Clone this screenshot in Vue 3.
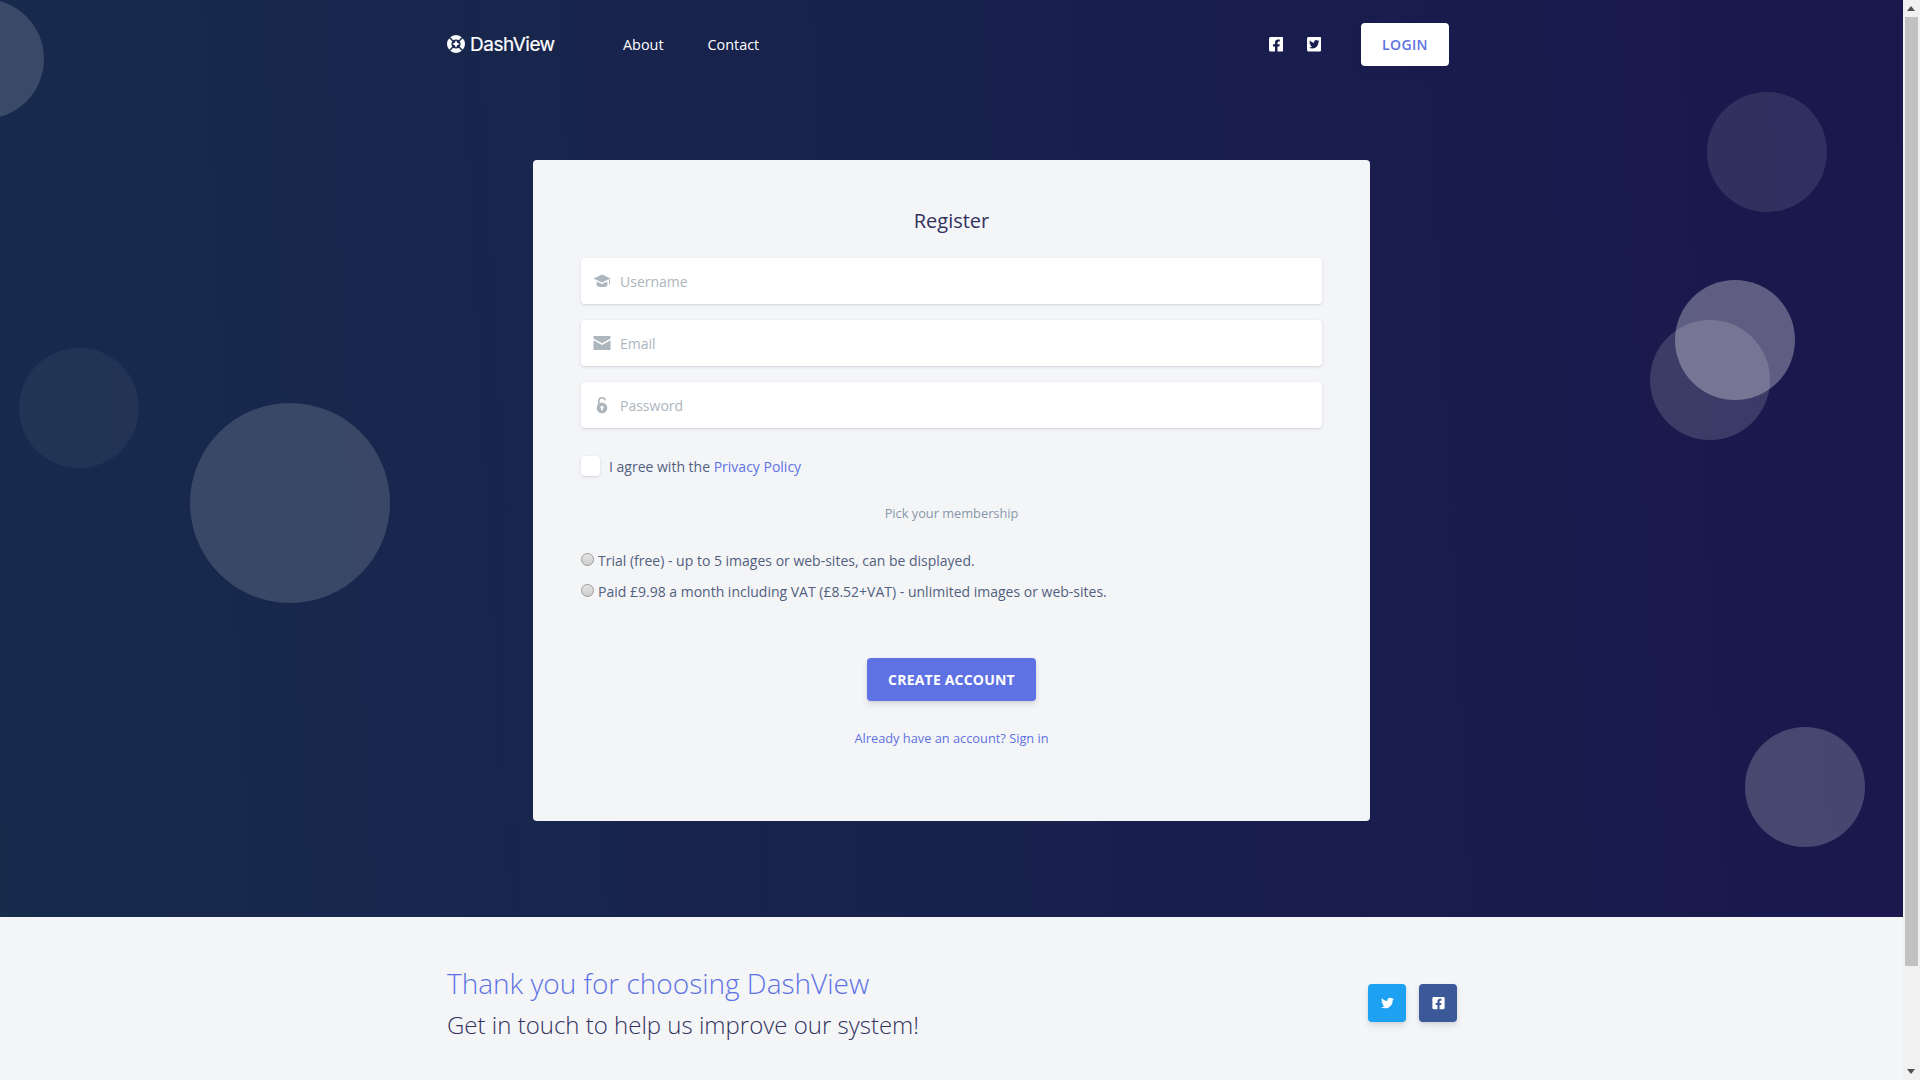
<script setup>
const circles = [
  { s: 120, x: -76, y: -1, a: 0.15 },
  { s: 120, x: 19, y: 348, a: 0.05 },
  { s: 200, x: 190, y: 403, a: 0.15 },
  { s: 120, x: 1707, y: 92, a: 0.1 },
  { s: 120, x: 1675, y: 280, a: 0.3 },
  { s: 120, x: 1650, y: 320, a: 0.15 },
  { s: 120, x: 1745, y: 727, a: 0.2 },
]
const circleStyle = (c) => ({ width: c.s + 'px', height: c.s + 'px', left: c.x + 'px', top: c.y + 'px', background: `rgba(255,255,255,${c.a})` })
const fbSquare = 'M400 32H48A48 48 0 0 0 0 80v352a48 48 0 0 0 48 48h137.25V327.69h-63V256h63v-54.64c0-62.15 37-96.48 93.67-96.48 27.14 0 55.52 4.84 55.52 4.84v61h-31.27c-30.81 0-40.42 19.12-40.42 38.73V256h68.78l-11 71.69h-57.78V480H400a48 48 0 0 0 48-48V80a48 48 0 0 0-48-48z'
const twSquare = 'M400 32H48C21.5 32 0 53.5 0 80v352c0 26.5 21.5 48 48 48h352c26.5 0 48-21.5 48-48V80c0-26.5-21.5-48-48-48zm-48.9 158.8c.2 2.8.2 5.7.2 8.5 0 86.7-66 186.6-186.6 186.6-37.2 0-71.7-10.8-100.7-29.4 5.3.6 10.4.8 15.8.8 30.7 0 58.9-10.4 81.4-28-28.8-.6-53-19.5-61.3-45.5 10.1 1.5 19.2 1.5 29.6-1.2-30-6.1-52.5-32.5-52.5-64.4v-.8c8.7 4.9 18.9 7.9 29.6 8.3a65.447 65.447 0 0 1-29.2-54.6c0-12.2 3.2-23.4 8.9-33.1 32.3 39.8 80.8 65.8 135.2 68.6-9.3-44.5 24-80.6 64-80.6 18.9 0 35.9 7.9 47.9 20.7 14.8-2.8 29-7.2 41.6-14.8-4.9 15.2-15.2 28-28.8 36 13.2-1.4 26-5.1 37.8-10.2-8.9 13.1-20.1 24.7-32.9 34z'
const bird = 'M459.37 151.716c.325 4.548.325 9.097.325 13.645 0 138.72-105.583 298.558-298.558 298.558-59.452 0-114.68-17.219-161.137-47.106 8.447.974 16.568 1.299 25.34 1.299 49.055 0 94.213-16.568 130.274-44.832-46.132-.975-84.792-31.188-98.112-72.772 6.498.974 12.995 1.624 19.818 1.624 9.421 0 18.843-1.3 27.614-3.573-48.081-9.747-84.143-51.98-84.143-102.985v-1.299c13.969 7.797 30.214 12.67 47.431 13.319-28.264-18.843-46.781-51.005-46.781-87.391 0-19.492 5.197-37.36 14.294-52.954 51.655 63.675 129.3 105.258 216.365 109.807-1.624-7.797-2.599-15.918-2.599-24.04 0-57.828 46.782-104.934 104.934-104.934 30.213 0 57.502 12.67 76.67 33.137 23.715-4.548 46.456-13.32 66.599-25.34-7.798 24.366-24.366 44.833-46.132 57.827 21.117-2.273 41.584-8.122 60.426-16.243-14.292 20.791-32.161 39.308-52.628 54.253z'
</script>

<template>
  <div class="page">
    <div class="main">
      <section class="hero">
        <span v-for="(c, i) in circles" :key="i" class="circle" :style="circleStyle(c)"></span>
        <nav class="nav">
          <a class="brand">
            <svg class="brand-mark" viewBox="0 0 18 18" aria-hidden="true">
              <circle cx="9" cy="9" r="9" fill="#fff"/>
              <path stroke="#182750" stroke-width="1.5" d="M2 2 6 6M16 2 12 6M2 16 6 12M16 16 12 12"/>
              <circle cx="9" cy="9" r="4.6" fill="#182750"/>
              <path fill="#fff" d="M9 5.2 10.3 7.7 12.8 9 10.3 10.3 9 12.8 7.7 10.3 5.2 9 7.7 7.7z"/>
            </svg>
            <span class="brand-text">DashView</span>
          </a>
          <div class="links">
            <a>About</a>
            <a>Contact</a>
          </div>
          <div class="nav-right">
            <svg class="top-icon" viewBox="0 0 448 512"><path fill="#fff" :d="fbSquare"/></svg>
            <svg class="top-icon" viewBox="0 0 448 512"><path fill="#fff" :d="twSquare"/></svg>
            <button class="login">Login</button>
          </div>
        </nav>

        <div class="card">
          <h2 class="title">Register</h2>
          <div class="field">
            <svg class="ficon" viewBox="0 0 18 18"><path fill="#adb5bd" d="M9 2.4 .5 6.4 9 10.4l8.5-4z"/><path fill="#adb5bd" d="M3.6 9.4 9 12l5.4-2.6v4.1C12.8 15.5 5.2 15.5 3.6 13.5z"/><path fill="#adb5bd" d="M16 7.4h.9v5H16z"/></svg>
            <input type="text" placeholder="Username" />
          </div>
          <div class="field">
            <svg class="ficon" viewBox="0 0 18 18"><path fill="#adb5bd" d="M.5 2h17v2.4L9 9.2.5 4.4z"/><path fill="#adb5bd" d="M.5 6.2 9 11l8.5-4.8V16H.5z"/></svg>
            <input type="email" placeholder="Email" />
          </div>
          <div class="field">
            <svg class="ficon" viewBox="0 0 18 18"><path fill="none" stroke="#adb5bd" stroke-width="1.6" d="M5.8 9V5.1C5.8 3 7.2 1.7 9 1.7s3 1 3.2 2.7"/><path fill="#adb5bd" fill-rule="evenodd" d="M9 6.6a5.3 5.3 0 1 1 0 10.6A5.3 5.3 0 0 1 9 6.6zm0 3.2a1.6 1.6 0 0 0-.8 3v1.8h1.6v-1.8a1.6 1.6 0 0 0-.8-3z"/></svg>
            <input type="password" placeholder="Password" />
          </div>

          <label class="agree">
            <span class="check"></span>
            <span class="agree-text">I agree with the <a class="link">Privacy Policy</a></span>
          </label>

          <p class="pick">Pick your membership</p>

          <label class="radio-row first"><input type="radio" name="m" /><span>Trial (free) - up to 5 images or web-sites, can be displayed.</span></label>
          <label class="radio-row"><input type="radio" name="m" /><span>Paid £9.98 a month including VAT (£8.52+VAT) - unlimited images or web-sites.</span></label>

          <div class="action"><button class="create">Create account</button></div>
          <p class="signin"><a class="link">Already have an account? Sign in</a></p>
        </div>
      </section>

      <footer class="footer">
        <div class="foot-text">
          <h3 class="thanks">Thank you for choosing DashView</h3>
          <h4 class="touch">Get in touch to help us improve our system!</h4>
        </div>
        <div class="foot-btns">
          <button class="soc tw"><svg viewBox="0 0 512 512"><path fill="#fff" :d="bird"/></svg></button>
          <button class="soc fb"><svg viewBox="0 0 448 512"><path fill="#fff" :d="fbSquare"/></svg></button>
        </div>
      </footer>
    </div>

    <div class="scrollbar" aria-hidden="true">
      <span class="arrow up"></span>
      <span class="thumb"></span>
      <span class="arrow down"></span>
    </div>
  </div>
</template>

<style>
html, body { margin: 0; overflow: hidden; }
</style>

<style scoped>
* { box-sizing: border-box; }
.page {
  display: flex;
  width: 1920px;
  height: 1080px;
  overflow: hidden;
  font-family: "Open Sans", sans-serif;
  color: #525f7f;
  font-size: 14px;
}
.main { width: 1903px; flex: none; display: flex; flex-direction: column; }
.hero {
  position: relative;
  height: 917px;
  flex: none;
  background: linear-gradient(87deg, #172b4d 0%, #1a174d 100%);
  overflow: hidden;
  padding-top: 23px;
}
.circle { position: absolute; border-radius: 50%; }
.nav {
  position: relative;
  display: flex;
  align-items: center;
  width: 1002px;
  height: 43px;
  margin-left: 447px;
}
.brand { display: flex; align-items: center; color: #fff; width: 176px; }
.brand-mark { width: 18px; height: 18px; margin-right: 5px; margin-top: -2px; }
.brand-text { font-family: Inter, sans-serif; font-weight: 400; font-size: 19px; letter-spacing: -0.5px; -webkit-text-stroke: 0.2px #fff; }
.links { display: flex; gap: 44px; color: #fff; font-size: 14.4px; }
.nav-right { margin-left: auto; display: flex; align-items: center; }
.top-icon { width: 14.5px; height: 16.5px; margin-right: 23.5px; }
.top-icon + .top-icon { margin-right: 40px; }
.login {
  width: 88px;
  height: 43px;
  border: 0;
  border-radius: 4px;
  background: #fff;
  color: #5e72e4;
  font: 600 14px "Open Sans", sans-serif;
  letter-spacing: 0.35px;
  text-transform: uppercase;
  box-shadow: 0 4px 6px rgba(50, 50, 93, 0.11), 0 1px 3px rgba(0, 0, 0, 0.08);
}
.card {
  position: relative;
  width: 837px;
  height: 661px;
  margin: 94px 0 0 533px;
  padding: 46px 48px 0;
  background: #f4f5f7;
  border-radius: 4px;
}
.title { margin: 0 0 22px; text-align: center; font-size: 20px; line-height: 30px; font-weight: 400; color: #32325d; }
.field {
  display: flex;
  align-items: center;
  height: 46px;
  margin-bottom: 16px;
  padding-left: 12px;
  background: #fff;
  border-radius: 4px;
  box-shadow: 0 1px 3px rgba(50, 50, 93, 0.15), 0 1px 0 rgba(0, 0, 0, 0.02);
}
.ficon { width: 18px; height: 18px; flex: none; margin-right: 9px; }
.field input {
  flex: 1;
  border: 0;
  outline: 0;
  padding: 0;
  background: transparent;
  font: 400 14px "Open Sans", sans-serif;
  color: #525f7f;
}
.field input::placeholder { color: #adb5bd; opacity: 1; }
.agree { display: flex; align-items: center; gap: 9px; margin-top: 28px; height: 20px; line-height: 20px; }
.agree-text { padding-top: 2px; }
.check {
  width: 19px;
  height: 20px;
  background: #fff;
  border-radius: 4px;
  box-shadow: 0 1px 3px rgba(50, 50, 93, 0.15), 0 1px 0 rgba(0, 0, 0, 0.02);
}
.link { color: #5e72e4; }
.pick { margin: 27px 0 0; text-align: center; font-size: 12.8px; line-height: 20px; color: #8898aa; }
.radio-row { display: flex; align-items: center; height: 22px; line-height: 22px; }
.radio-row.first { margin-top: 27px; margin-bottom: 9px; }
.radio-row input {
  appearance: none;
  width: 13px;
  height: 13px;
  margin: -4px 4px 0 0;
  flex: none;
  border: 1px solid #9a9a9a;
  border-radius: 50%;
  background: linear-gradient(#e4e4e4, #cfcfcf);
}
.action { display: flex; justify-content: center; margin-top: 55px; }
.create {
  width: 169px;
  height: 43px;
  border: 0;
  border-radius: 4px;
  background: #5e72e4;
  color: #fff;
  font: 700 14px "Open Sans", sans-serif;
  letter-spacing: 0.2px;
  text-transform: uppercase;
  box-shadow: 0 4px 6px rgba(50, 50, 93, 0.11), 0 1px 3px rgba(0, 0, 0, 0.08);
}
.signin { margin: 27px 0 0; text-align: center; font-size: 12.8px; line-height: 20px; }
.footer {
  flex: 1;
  display: flex;
  background: #f4f5f7;
  padding: 47px 0 0 447px;
}
.foot-text { width: 921px; }
.thanks { margin: 0; font-size: 28px; line-height: 38px; font-weight: 300; color: #5e72e4; }
.touch { margin: 5px 0 0; font-size: 24px; line-height: 36px; font-weight: 300; color: #32325d; }
.foot-btns { display: flex; gap: 13px; margin-top: 20px; }
.soc {
  width: 38px;
  height: 38px;
  border: 0;
  padding: 0;
  border-radius: 4px;
  display: flex;
  align-items: center;
  justify-content: center;
  box-shadow: 0 4px 6px rgba(50, 50, 93, 0.11), 0 1px 3px rgba(0, 0, 0, 0.08);
}
.soc svg { width: 13px; height: 14px; }
.tw { background: #1da1f2; }
.fb { background: #3b5999; }
.scrollbar {
  position: relative;
  width: 17px;
  flex: none;
  background: #f1f1f1;
}
.thumb { position: absolute; left: 2px; top: 17px; width: 13px; height: 949px; background: #c1c1c1; }
.arrow { position: absolute; left: 4px; width: 0; height: 0; border-left: 4.5px solid transparent; border-right: 4.5px solid transparent; }
.up { top: 6px; border-bottom: 5px solid #505050; }
.down { bottom: 6px; border-top: 5px solid #505050; }
</style>
